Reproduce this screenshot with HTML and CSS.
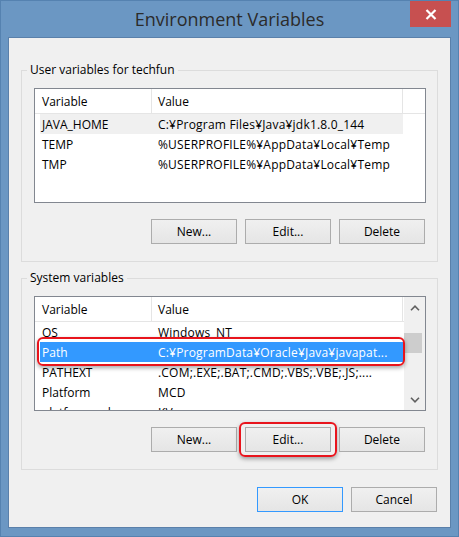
FILE: index.html
```html
<!DOCTYPE html>
<html lang="en">
<head>
    <meta charset="UTF-8">
    <title>Environment Variables</title>
    <link rel="stylesheet" href="styles.css">
</head>
<body>
    <div class="window">
        <div class="titlebar">
            <span class="title">Environment Variables</span>
            <div class="close">
                <svg width="12" height="11" viewBox="0 0 12 11">
                    <path d="M1.5 1 L10.5 10 M10.5 1 L1.5 10" stroke="#fff" stroke-width="2.2" fill="none"/>
                </svg>
            </div>
        </div>

        <div class="client">
            <fieldset class="group">
                <legend>User variables for techfun</legend>
                <div class="list">
                    <div class="list-body">
                        <div class="list-head">
                            <span class="head-var">Variable</span>
                            <span class="head-val">Value</span>
                            <span class="head-fill"></span>
                        </div>
                        <div class="row hover">
                            <span class="col-var">JAVA_HOME</span>
                            <span class="col-val">C:¥Program Files¥Java¥jdk1.8.0_144</span>
                        </div>
                        <div class="row">
                            <span class="col-var">TEMP</span>
                            <span class="col-val">%USERPROFILE%¥AppData¥Local¥Temp</span>
                        </div>
                        <div class="row">
                            <span class="col-var">TMP</span>
                            <span class="col-val">%USERPROFILE%¥AppData¥Local¥Temp</span>
                        </div>
                    </div>
                </div>
                <div class="buttons">
                    <button class="btn">New...</button>
                    <button class="btn">Edit...</button>
                    <button class="btn">Delete</button>
                </div>
            </fieldset>

            <fieldset class="group second">
                <legend>System variables</legend>
                <div class="list">
                    <div class="list-body">
                        <div class="list-head">
                            <span class="head-var">Variable</span>
                            <span class="head-val">Value</span>
                            <span class="head-fill"></span>
                        </div>
                        <div class="row">
                            <span class="col-var">OS</span>
                            <span class="col-val">Windows_NT</span>
                        </div>
                        <div class="row selected marked">
                            <span class="col-var">Path</span>
                            <span class="col-val">C:¥ProgramData¥Oracle¥Java¥javapat...</span>
                        </div>
                        <div class="row">
                            <span class="col-var">PATHEXT</span>
                            <span class="col-val">.COM;.EXE;.BAT;.CMD;.VBS;.VBE;.JS;....</span>
                        </div>
                        <div class="row">
                            <span class="col-var">Platform</span>
                            <span class="col-val">MCD</span>
                        </div>
                        <div class="row">
                            <span class="col-var">platformcode</span>
                            <span class="col-val">KV</span>
                        </div>
                    </div>
                    <div class="scrollbar">
                        <div class="arrow">
                            <svg width="10" height="6" viewBox="0 0 10 6">
                                <path d="M1 5.2 L5 1.2 L9 5.2" stroke="#606060" stroke-width="1.6" fill="none"/>
                            </svg>
                        </div>
                        <div class="track">
                            <div class="thumb"></div>
                        </div>
                        <div class="arrow">
                            <svg width="10" height="6" viewBox="0 0 10 6">
                                <path d="M1 0.8 L5 4.8 L9 0.8" stroke="#606060" stroke-width="1.6" fill="none"/>
                            </svg>
                        </div>
                    </div>
                </div>
                <div class="buttons">
                    <button class="btn">New...</button>
                    <button class="btn marked">Edit...</button>
                    <button class="btn">Delete</button>
                </div>
            </fieldset>

            <div class="buttons dialog-buttons">
                <button class="btn default">OK</button>
                <button class="btn">Cancel</button>
            </div>
        </div>
    </div>
</body>
</html>
```

FILE: styles.css
```css
body {
    margin: 0;
    font-family: "Open Sans", "Noto Sans", sans-serif;
    font-size: 12px;
    color: #000;
}

.window {
    box-sizing: border-box;
    width: 459px;
    height: 537px;
    background-color: #6b97c3;
    border: 1px solid #5582b0;
    padding: 0 7px 8px 7px;
    display: flex;
    flex-direction: column;
}

.titlebar {
    position: relative;
    height: 36px;
    margin: 0 -7px;
    display: flex;
    justify-content: center;
    align-items: center;
}

.title {
    font-size: 18px;
    color: #2b2b2b;
}

.close {
    position: absolute;
    top: 0;
    right: 7px;
    width: 41px;
    height: 26px;
    background-color: #c75050;
    display: flex;
    justify-content: center;
    align-items: center;
}

.client {
    flex: 1;
    background-color: #f0f0f0;
    border: 1px solid #5a80aa;
    display: flex;
    flex-direction: column;
}

.group {
    margin: 24px 12px 0 12px;
    padding: 10px 11px 17px 5px;
    border: 1px solid #dcdcdc;
    min-width: 0;
}

.group.second {
    margin-top: 8px;
}

legend {
    padding: 0 3px;
    line-height: 16px;
}

.list {
    box-sizing: border-box;
    width: 392px;
    height: 115px;
    margin-left: 7px;
    border: 1px solid #828790;
    background-color: #fff;
    display: flex;
    overflow: hidden;
}

.list-body {
    flex: 1;
    min-width: 0;
}

.list-head {
    display: flex;
    height: 25px;
}

.list-head span {
    box-sizing: border-box;
    height: 25px;
    padding-top: 2px;
    line-height: 22px;
    border-bottom: 1px solid #e5e5e5;
}

.head-var {
    width: 117px;
    padding-left: 7px;
    border-right: 1px solid #e5e5e5;
}

.head-val {
    width: 251px;
    padding-left: 6px;
    border-right: 1px solid #e5e5e5;
}

.head-fill {
    flex: 1;
}

.row {
    position: relative;
    display: flex;
    width: 363px;
    height: 20px;
    margin-left: 5px;
    white-space: nowrap;
}

.row span {
    box-sizing: border-box;
    padding-top: 1px;
    line-height: 19px;
    overflow: hidden;
}

.row.hover {
    background-color: #f0f0f0;
}

.row.selected {
    background-color: #3399ff;
    color: #fff;
}

.col-var {
    width: 112px;
    padding-left: 2px;
}

.col-val {
    width: 251px;
    padding-left: 6px;
    letter-spacing: 0.2px;
}

.marked::after {
    content: "";
    position: absolute;
    border: 2px solid #e8141c;
    border-radius: 6px;
    box-shadow: 0 2px 4px rgba(0, 0, 0, 0.35);
}

.row.marked::after {
    top: -5px;
    bottom: -4px;
    left: -3px;
    right: -2px;
}

.btn.marked::after {
    top: -6px;
    bottom: -6px;
    left: -7px;
    right: -7px;
}

.scrollbar {
    width: 21px;
    background-color: #f0f0f0;
    display: flex;
    flex-direction: column;
}

.arrow {
    height: 21px;
    display: flex;
    justify-content: center;
    align-items: center;
}

.track {
    flex: 1;
    padding-top: 15px;
}

.thumb {
    width: 18px;
    height: 20px;
    background-color: #cdcdcd;
}

.buttons {
    display: flex;
    justify-content: flex-end;
    gap: 8px;
    margin-top: 16px;
    margin-right: 1px;
}

.btn {
    position: relative;
    box-sizing: border-box;
    width: 86px;
    height: 25px;
    padding: 0;
    font-family: inherit;
    font-size: 12px;
    color: #000;
    background: linear-gradient(#f0f0f0, #e5e5e5);
    border: 1px solid #acacac;
}

.btn.default {
    border-color: #3399ff;
}

.dialog-buttons {
    margin-top: 17px;
    margin-right: 13px;
}
```
